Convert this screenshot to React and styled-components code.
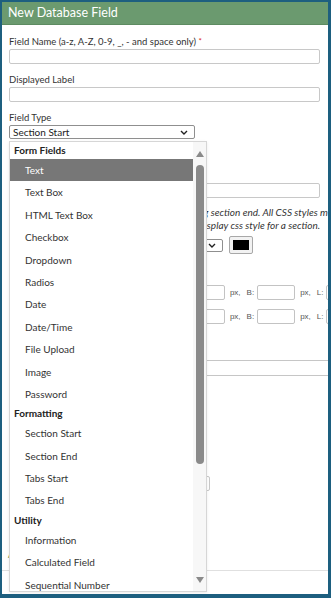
import React from 'react';
import styled, { createGlobalStyle } from 'styled-components';

const Global = createGlobalStyle`
  html, body { margin: 0; padding: 0; background: #fff; }
  body { font-family: Lato, "Liberation Sans", sans-serif; }
`;

const Frame = styled.div`
  position: relative;
  width: 331px;
  height: 598px;
  box-sizing: border-box;
  border-style: solid;
  border-color: #1d5f7f;
  border-width: 2px 3px 4px 2px;
  overflow: hidden;
  background: #fff;
`;

const Header = styled.div`
  height: 22px;
  background: #6b9a6f;
  border-bottom: 1px solid #5d8b61;
  color: #fff;
  font-size: 12.5px;
  line-height: 22px;
  padding-left: 6px;
`;

const Body = styled.div`
  padding: 10px 8px 0 7px;
  color: #333;
`;

const Field = styled.div`
  margin-top: ${p => p.$mt || 0}px;
`;

const Label = styled.div`
  font-size: 9.5px;
  line-height: 13px;
  margin-bottom: 1px;
  white-space: nowrap;
`;

const Req = styled.span`
  color: #d22;
  font-size: 8px;
  vertical-align: top;
`;

const TextInput = styled.div`
  box-sizing: border-box;
  height: 15px;
  width: ${p => p.$w || '100%'};
  border: 1px solid #c8c8c8;
  border-radius: 2px;
  background: #fff;
`;

const SelectBox = styled.div`
  box-sizing: border-box;
  display: flex;
  align-items: center;
  justify-content: space-between;
  height: ${p => p.$h || 14}px;
  width: ${p => p.$w}px;
  border: 1px solid #8f8f8f;
  border-radius: 2px;
  padding: 0 6px 0 3px;
  font-size: 10px;
  color: #222;
  background: #fff;
`;

const Chevron = () => (
  <svg width="8" height="5" viewBox="0 0 8 5">
    <path d="M1 1 L4 4 L7 1" fill="none" stroke="#222" strokeWidth="1.4" />
  </svg>
);

const Help = styled.div`
  margin-top: 8px;
  font-size: 10px;
  font-style: italic;
  line-height: 13px;
  white-space: nowrap;
  color: #333;
`;

const ColorRow = styled.div`
  display: flex;
  align-items: center;
  margin-top: 4px;
  gap: 6px;
`;

const Swatch = styled.div`
  box-sizing: border-box;
  width: 24px;
  height: 18px;
  padding: 3px;
  border: 1px solid #a8a8a8;
  border-radius: 2px;
  background: #f2f2f2;
  & > div { width: 100%; height: 100%; background: #000; }
`;

const PadRow = styled.div`
  display: flex;
  align-items: center;
  white-space: nowrap;
  height: 15px;
  margin-top: ${p => p.$mt}px;
  font-family: "Liberation Sans", Arial, sans-serif;
  font-size: 8px;
  color: #555;
`;

const PadLabel = styled.span`
  flex: none;
  ${p => (p.$w ? `width: ${p.$w}px;` : '')}
  margin: 0 ${p => p.$mr || 0}px 0 ${p => p.$ml || 0}px;
`;

const SmallInput = styled.div`
  box-sizing: border-box;
  flex: none;
  width: 38px;
  height: 15px;
  border: 1px solid #c3c3c3;
  border-radius: 2px;
`;

const EditorBox = styled.div`
  margin-top: 36px;
  margin-right: -20px;
  border-top: 1px solid #c6c6c6;
  height: 14px;
  border-bottom: 1px solid #c6c6c6;
`;

const GreenText = styled.div`
  margin-top: 59px;
  margin-left: -1px;
  font-size: 8px;
  color: #4a8a3a;
  line-height: 10px;
`;

const Footer = styled.div`
  margin: 10px -8px 0 -7px;
  border-top: 1px solid #e0e0e0;
  height: 30px;
`;

/* Dropdown overlay */
const Dropdown = styled.div`
  position: absolute;
  left: 7px;
  top: 139px;
  width: 198px;
  height: 451px;
  box-sizing: border-box;
  border: 1px solid #d6d6d6;
  background: #fff;
  display: flex;
  overflow: hidden;
  box-shadow: 0 1px 3px rgba(0,0,0,0.08);
`;

const List = styled.div`
  flex: 1;
  overflow: hidden;
`;

const Group = styled.div`
  height: 17px;
  line-height: 17px;
  padding-left: 4px;
  font-size: 10px;
  font-weight: 700;
  color: #222;
`;

const Item = styled.div`
  height: 22.4px;
  line-height: 22.4px;
  padding-left: 15px;
  font-size: 10px;
  color: ${p => (p.$active ? '#fff' : '#333')};
  background: ${p => (p.$active ? '#777' : 'transparent')};
  white-space: nowrap;
`;

const ScrollCol = styled.div`
  width: 13px;
  flex: none;
  background: #f7f7f7;
  display: flex;
  flex-direction: column;
  align-items: center;
`;

const Arrow = styled.div`
  width: 0;
  height: 0;
  border-left: 4.5px solid transparent;
  border-right: 4.5px solid transparent;
  ${p => (p.$down
    ? 'border-top: 6px solid #8a8a8a; margin-top: auto; margin-bottom: 8px;'
    : 'border-bottom: 6px solid #8a8a8a; margin-top: 9px;')}
`;

const Thumb = styled.div`
  width: 8px;
  height: 299px;
  margin-top: 8px;
  border-radius: 4px;
  background: #8a8a8a;
`;

const groups = [
  { name: 'Form Fields', items: ['Text', 'Text Box', 'HTML Text Box', 'Checkbox', 'Dropdown', 'Radios', 'Date', 'Date/Time', 'File Upload', 'Image', 'Password'] },
  { name: 'Formatting', items: ['Section Start', 'Section End', 'Tabs Start', 'Tabs End'] },
  { name: 'Utility', items: ['Information', 'Calculated Field', 'Sequential Number', 'Signature'] },
];

const PadLine = ({ mt, title }) => (
  <PadRow $mt={mt}>
    <PadLabel $w={98}>{title}</PadLabel>
    {['T:', 'R:', 'B:', 'L:'].map((s) => (
      <React.Fragment key={s}>
        <PadLabel $mr={3}>{s}</PadLabel>
        <SmallInput />
        <PadLabel $ml={5} $mr={6}>px,</PadLabel>
      </React.Fragment>
    ))}
  </PadRow>
);

export default function App() {
  return (
    <>
      <Global />
      <Frame>
        <Header>New Database Field</Header>
        <Body>
          <Field>
            <Label>Field Name (a-z, A-Z, 0-9, _, - and space only) <Req>*</Req></Label>
            <TextInput />
          </Field>
          <Field $mt={9}>
            <Label>Displayed Label</Label>
            <TextInput />
          </Field>
          <Field $mt={9}>
            <Label>Field Type</Label>
            <SelectBox $w={186}>
              <span>Section Start</span>
              <Chevron />
            </SelectBox>
          </Field>
          <Field $mt={30}>
            <Label>Section Title</Label>
            <TextInput />
          </Field>
          <Help>
            <div>Fields after this field are grouped up until closing section end. All CSS styles must be valid.</div>
            <div>Use options below to set margin, padding and display css style for a section.</div>
          </Help>
          <ColorRow>
            <SelectBox $w={214} $h={13}>
              <span>Default</span>
              <Chevron />
            </SelectBox>
            <Swatch><div /></Swatch>
          </ColorRow>
          <PadLine mt={31} title="Margin" />
          <PadLine mt={9} title="Padding" />
          <EditorBox />
          <Field $mt={100}>
            <TextInput $w="201px" />
          </Field>
          <GreenText>Advanced</GreenText>
          <Footer />
        </Body>
        <Dropdown>
          <List>
            {groups.map((g) => (
              <React.Fragment key={g.name}>
                <Group>{g.name}</Group>
                {g.items.map((it) => (
                  <Item key={it} $active={it === 'Text'}>{it}</Item>
                ))}
              </React.Fragment>
            ))}
          </List>
          <ScrollCol>
            <Arrow />
            <Thumb />
            <Arrow $down />
          </ScrollCol>
        </Dropdown>
      </Frame>
    </>
  );
}
